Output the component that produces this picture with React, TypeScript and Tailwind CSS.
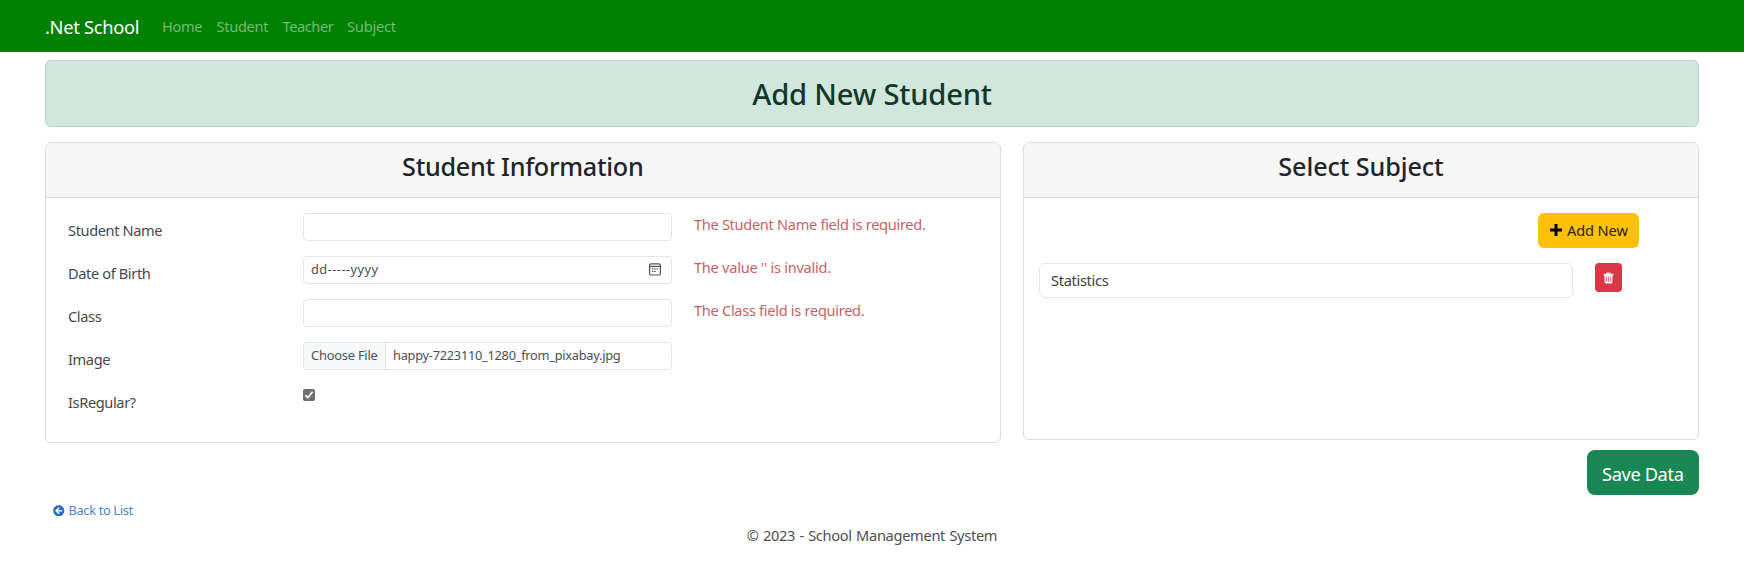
import type { ReactNode } from "react";
import { FaArrowCircleLeft } from "react-icons/fa";

function FormRow({ label, error, children }: { label: string; error?: ReactNode; children: ReactNode }) {
  return (
    <div className="flex h-[43px] items-start">
      <label className="w-[235px] shrink-0 pt-1.5 text-[14.6px] leading-[23px] tracking-[-0.38px] text-[#44494d]">{label}</label>
      <div className="w-[368.5px] shrink-0">{children}</div>
      <span className="ml-[22.5px] whitespace-nowrap text-[14.6px] leading-[22px] text-[#cb5f66]">{error}</span>
    </div>
  );
}

function PlusIcon() {
  return (
    <svg width="12" height="12" viewBox="0 0 12 12" className="mr-[5px] shrink-0">
      <path d="M4.5 0h3v4.5H12v3H7.5V12h-3V7.5H0v-3h4.5z" fill="#000" />
    </svg>
  );
}

function CalendarIcon() {
  return (
    <svg width="12" height="13" viewBox="0 0 12 13" fill="none" className="shrink-0">
      <rect x="0.6" y="0.8" width="10.8" height="11.2" rx="1.4" stroke="#505457" strokeWidth="1.2" />
      <path d="M0.6 3.4h10.8" stroke="#505457" strokeWidth="1.2" />
      <path d="M3 5.2h1.4v1.4H3zM5.3 5.2h1.4v1.4H5.3zM7.6 5.2H9v1.4H7.6zM3 7.7h1.4v1.4H3zM5.3 7.7h1.4v1.4H5.3z" fill="#505457" />
    </svg>
  );
}

function TrashIcon() {
  return (
    <svg width="11" height="12" viewBox="0 0 12 12" fill="none">
      <path d="M4.1 1.6V0.6h3.8v1" stroke="#fff" strokeWidth="1" />
      <path d="M0.6 1.5h10.8v1.5H0.6z" fill="#fff" />
      <path d="M1.5 3h9l-0.4 8c0 .6-.4 1-1 1H2.9c-.6 0-1-.4-1-1z" fill="#fff" />
      <path d="M3.9 4.6v5.6M6 4.6v5.6M8.1 4.6v5.6" stroke="#dc3545" strokeWidth="0.8" />
    </svg>
  );
}

const inputBox = "flex h-[28.5px] w-full items-center rounded-[4px] border border-[#e4e7ea] bg-white text-[12.8px] text-[#4b5054]";

export default function App() {
  return (
    <div className="h-[568px] w-full overflow-hidden bg-white font-['Noto_Sans',sans-serif] text-[#212529]">
      <nav className="flex h-[52px] items-center bg-[#008000] pl-[45px] text-[14.6px] leading-[52px] text-[#73bb73]">
        <a className="w-[117px] pt-px text-[18.3px] tracking-[-0.3px] text-white">.Net School</a>
        <a className="w-[54.5px] tracking-[-0.38px]">Home</a>
        <a className="w-[66px] tracking-[-0.3px]">Student</a>
        <a className="w-[64.5px] tracking-[-0.42px]">Teacher</a>
        <a className="tracking-[-0.2px]">Subject</a>
      </nav>

      <main className="ml-[45px] w-[1654px]">
        <div className="mt-2 flex h-[67px] items-start justify-center rounded-[6px] border border-[#b9d6c9] bg-[#d1e7dd] pt-[15px]">
          <h1 className="text-[29.2px] font-medium leading-[37px] tracking-[-0.22px] text-[#113829]">Add New Student</h1>
        </div>

        <div className="mt-[15px] flex items-start justify-between">
          <section className="h-[301px] w-[955.5px] rounded-[6px] border border-[#dcdddf]">
            <header className="flex h-[55px] items-start justify-center rounded-t-[5px] border-b border-[#dcdddf] bg-[#f7f7f7] pt-[7px]">
              <h2 className="text-[25.2px] font-medium leading-[33px] tracking-[-0.3px]">Student Information</h2>
            </header>
            <div className="pl-[22px] pt-[14.5px]">
              <FormRow label="Student Name" error={<span className="tracking-[-0.31px]">The Student Name field is required.</span>}>
                <div className={inputBox} />
              </FormRow>
              <FormRow label="Date of Birth" error={<span className="tracking-[-0.27px]">The value '' is invalid.</span>}>
                <div className={`${inputBox} justify-between pl-[7px] pr-[10px]`}>
                  <span className="tracking-[0.46px]">dd-----yyyy</span>
                  <CalendarIcon />
                </div>
              </FormRow>
              <FormRow label="Class" error={<span className="tracking-[-0.3px]">The Class field is required.</span>}>
                <div className={inputBox} />
              </FormRow>
              <FormRow label="Image">
                <div className={`${inputBox} overflow-hidden`}>
                  <span className="flex h-full w-[82px] items-center border-r border-[#e4e7ea] bg-[#f6f8fa] pl-[7px] tracking-[-0.18px]">Choose File</span>
                  <span className="pl-[7px] tracking-[-0.26px]">happy-7223110_1280_from_pixabay.jpg</span>
                </div>
              </FormRow>
              <FormRow label="IsRegular?">
                <div className="mt-[4.5px] flex h-[12px] w-[12px] items-center justify-center rounded-[2px] bg-[#707070]">
                  <svg width="10" height="10" viewBox="0 0 10 10" fill="none">
                    <path d="M1.4 5.2 3.8 7.7 8.6 1.8" stroke="#fff" strokeWidth="1.7" />
                  </svg>
                </div>
              </FormRow>
            </div>
          </section>

          <section className="h-[298px] w-[676px] rounded-[6px] border border-[#dcdddf]">
            <header className="flex h-[55px] items-start justify-center rounded-t-[5px] border-b border-[#dcdddf] bg-[#f7f7f7] pt-[7px]">
              <h2 className="text-[25.2px] font-medium leading-[33px] tracking-[-0.1px]">Select Subject</h2>
            </header>
            <div className="flex justify-end pr-[59px] pt-[14.5px]">
              <button className="flex h-[35.5px] w-[101px] items-center rounded-[6px] bg-[#ffc107] pl-[12px] text-[14.6px] tracking-[-0.12px] text-[#2a2206]">
                <PlusIcon />
                <span className="pt-px">Add New</span>
              </button>
            </div>
            <div className="flex items-start pl-[15px] pt-[15px]">
              <div className="h-[35px] w-[534px] rounded-[6px] border border-[#e4e7ea] pl-[11px] text-[14.6px] leading-[33px] tracking-[-0.32px] text-[#3a3f43]">Statistics</div>
              <button className="ml-[22px] flex h-[29px] w-[27px] items-center justify-center rounded-[4px] bg-[#dc3545]">
                <TrashIcon />
              </button>
            </div>
          </section>
        </div>

        <div className="mt-[7px] flex justify-end">
          <button className="h-[45px] w-[112.5px] rounded-[8px] bg-[#198754] text-[18.3px] leading-[47px] tracking-[-0.4px] text-white">Save Data</button>
        </div>
        <a className="ml-2 mt-[7px] flex h-[17px] w-[100px] items-center gap-[4px] text-[12.8px] leading-[17px] tracking-[-0.33px] text-[#4c85d8]">
          <FaArrowCircleLeft className="h-[11.5px] w-[11.5px] text-[#2a69cf]" />
          Back to List
        </a>
      </main>

      <footer className="mt-[5px] text-center text-[14.6px] leading-[23px] tracking-[-0.3px] text-[#4b5054] [word-spacing:0.8px]">© 2023 - School Management System</footer>
    </div>
  );
}
